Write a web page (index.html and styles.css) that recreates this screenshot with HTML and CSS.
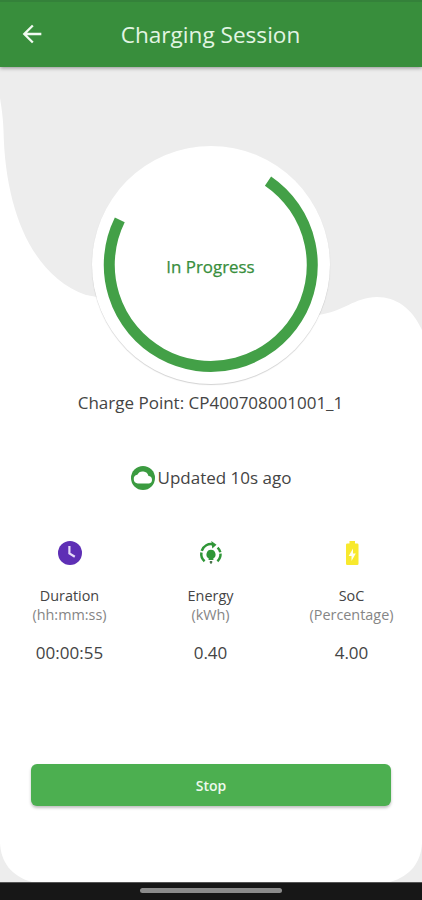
FILE: index.html
```html
<!DOCTYPE html>
<html lang="en">
<head>
<meta charset="utf-8">
<title>Charging Session</title>
<link rel="stylesheet" href="styles.css">
</head>
<body>
<div class="app">
  <header class="bar">
    <svg class="back" viewBox="0 0 24 24"><path d="M20 11H7.83l5.59-5.59L12 4l-8 8 8 8 1.41-1.41L7.83 13H20v-2z"/></svg>
    <h1 class="title">Charging Session</h1>
  </header>
  <main class="session">
    <svg class="backdrop" viewBox="0 67 422 815" preserveAspectRatio="none">
      <path d="M0 67H422V330C412 308 396 297 377 297C355 297 343 312 318 315H120C110 297 96 297 86 295C32 276 5 210 3.500 130C3 115 1 105 0 98Z"/>
      <path d="M0 843C1 862 11 876 32 882H0Z"/>
      <path d="M422 843C421 862 411 876 390 882H422Z"/>
    </svg>
    <div class="dial">
      <svg class="ring" viewBox="0 0 238 238"><path d="M176 35.100A101.500 101.500 0 1 1 27.800 73.900"/></svg>
      <span class="state">In Progress</span>
    </div>
    <p class="point">Charge Point: CP400708001001_1</p>
    <p class="updated">
      <svg class="cloud" viewBox="0 0 24 24"><circle cx="12" cy="12" r="12"/><path d="M18 17.500H6.800A4.400 4.400 0 0 1 6.300 8.800A6 6 0 0 1 17.500 10A3.800 3.800 0 0 1 18 17.500Z"/></svg>
      <span>Updated 10s ago</span>
    </p>
    <section class="stats">
      <div class="stat">
        <svg class="icon" viewBox="0 0 24 24"><circle cx="12" cy="12" r="12" fill="#5e2fb5"/><path d="M11.400 5V12.500L16.800 15.800" fill="none" stroke="#e6dcf8" stroke-width="2.200"/></svg>
        <span class="name">Duration</span>
        <span class="unit">(hh:mm:ss)</span>
        <span class="value">00:00:55</span>
      </div>
      <div class="stat">
        <svg class="icon" viewBox="0 0 24 24"><g fill="none" stroke="#2f9637" stroke-width="2.500"><path d="M5.600 20.200A9.500 9.500 0 0 1 2.400 11.500"/><path d="M2.700 9.900A9.500 9.500 0 0 1 14.500 3.500"/><path d="M18.600 6.600A9.500 9.500 0 0 1 21.300 11.300"/><path d="M21.500 12.600A9.500 9.500 0 0 1 18.400 20.200"/></g><path d="M12.300 0L17.500 3.700L13.300 7.500ZM12 8.800A4.600 4.600 0 0 1 14.400 17.300V19H9.600V17.300A4.600 4.600 0 0 1 12 8.800Z" fill="#2f9637"/><path d="M10.800 20H13.200V21.500L12.600 22.800H11.400L10.800 21.500Z" fill="#4b754d"/></svg>
        <span class="name">Energy</span>
        <span class="unit">(kWh)</span>
        <span class="value">0.40</span>
      </div>
      <div class="stat">
        <svg class="icon" viewBox="0 0 24 24"><path d="M7.300 2.500H9.500V0H15V2.500H17.200Q18.500 2.500 18.500 3.800V22.700Q18.500 24 17.200 24H7.300Q6 24 6 22.700V3.800Q6 2.500 7.300 2.500Z" fill="#f8e92d"/><path d="M13 7.500L8.700 15H11.500V20L15.800 12.500H13Z" fill="#fffef0"/></svg>
        <span class="name">SoC</span>
        <span class="unit">(Percentage)</span>
        <span class="value">4.00</span>
      </div>
    </section>
    <button class="stop">Stop</button>
  </main>
  <footer class="nav"><span class="handle"></span></footer>
</div>
</body>
</html>
```
FILE: styles.css
```css
* { box-sizing: border-box; }
body {
  margin: 0;
  font-family: "Open Sans", "Noto Sans", sans-serif;
  color: #444;
}
.app {
  width: 422px;
  height: 900px;
  display: flex;
  flex-direction: column;
  background: #fff;
  overflow: hidden;
}
.bar {
  height: 67px;
  flex: none;
  display: grid;
  grid-template-columns: 63px 1fr 64px;
  align-items: center;
  background: #388e3c;
  border-top: 2px solid #34813a;
  box-shadow: 0 1px 4px rgba(0, 0, 0, .4);
  z-index: 1;
}
.back {
  width: 28px;
  height: 28px;
  margin: -2px 0 0 18px;
  fill: #f1faf1;
}
.title {
  margin: 1px 0 0;
  text-align: center;
  font-size: 22.600px;
  line-height: 30px;
  font-weight: 400;
  color: #e2f5e3;
  white-space: nowrap;
}
.session {
  position: relative;
  flex: 1;
  display: flex;
  flex-direction: column;
  align-items: center;
  isolation: isolate;
}
.backdrop {
  position: absolute;
  inset: 0;
  width: 100%;
  height: 100%;
  fill: #ededed;
  z-index: -1;
}
.dial {
  width: 238px;
  height: 238px;
  margin-top: 79px;
  display: grid;
  place-items: center;
  border-radius: 50%;
  background: #fff;
  box-shadow: 0 1px 1px rgba(0, 0, 0, .18);
}
.ring, .state { grid-area: 1 / 1; }
.ring {
  width: 238px;
  height: 238px;
  fill: none;
  stroke: #43a047;
  stroke-width: 11;
}
.state {
  margin: 4px 1px 0 0;
  font-size: 16.900px;
  line-height: 22px;
  color: #388e3c;
  -webkit-text-stroke: .25px #388e3c;
}
.point, .updated {
  margin: 0;
  font-size: 17px;
  line-height: 24px;
  white-space: nowrap;
}
.point { margin: 7px 1px 0 0; }
.updated {
  margin-top: 51px;
  display: flex;
  align-items: center;
  gap: 3px;
}
.cloud { width: 24px; height: 24px; fill: #3b9b40; }
.cloud path { fill: #fff; }
.stats {
  width: 421px;
  margin: 51px 1px 0 0;
  display: grid;
  grid-template-columns: repeat(3, 141px);
  justify-content: center;
}
.stat {
  display: flex;
  flex-direction: column;
  align-items: center;
}
.icon { width: 24px; height: 24px; margin-bottom: 20px; }
.name, .unit { font-size: 14.400px; line-height: 19px; }
.name { margin-top: 1px; }
.unit { color: #858585; }
.value { margin-top: 17px; font-size: 17px; line-height: 24px; }
.stop {
  width: 360px;
  height: 42px;
  margin-top: 99px;
  padding: 2px 0 0;
  border: 0;
  border-radius: 6px;
  background: #4caf50;
  box-shadow: 0 2px 3px rgba(0, 0, 0, .25);
  font: 600 14px/40px "Open Sans", sans-serif;
  color: #edf9ed;
}
.nav {
  height: 18px;
  flex: none;
  display: flex;
  justify-content: center;
  align-items: center;
  background: #171717;
  border-top: 1px solid #555;
}
.handle {
  width: 142px;
  height: 5px;
  margin-top: -2px;
  border-radius: 3px;
  background: #8c8c8c;
}
```
